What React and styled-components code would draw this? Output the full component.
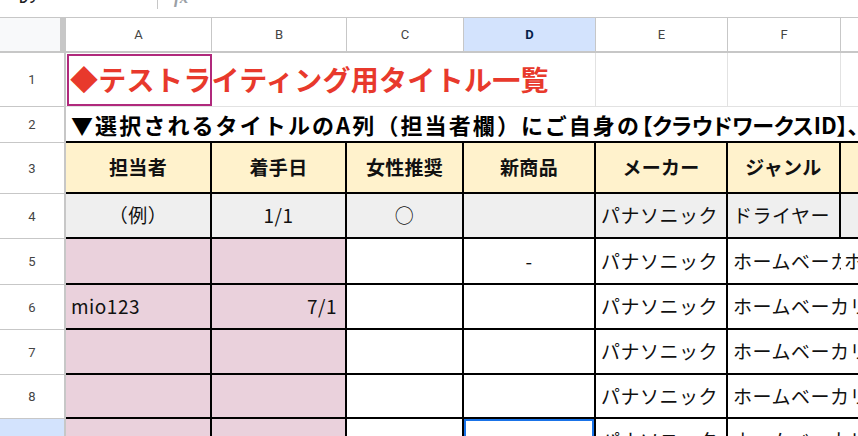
import React from 'react'
import styled, { createGlobalStyle, css } from 'styled-components'

const GlobalStyle = createGlobalStyle`
  html, body {
    margin: 0;
    padding: 0;
    background: #fff;
    overflow: hidden;
  }
`

const JP = `"Noto Sans CJK JP", "Noto Sans", sans-serif`
const UI = `Roboto, "Liberation Sans", Arial, sans-serif`

const YELLOW = '#fff2cc'
const GREY = '#efefef'
const PINK = '#ead1dc'
const HEAD_LINE = '#c7c7c7'

const COLS = [146, 135, 117, 132, 132, 113, 140]
const LETTERS = ['A', 'B', 'C', 'D', 'E', 'F', 'G']
const ACTIVE_COL = 3
const ACTIVE_ROW = 9

const line = (t) => {
  if (t === 'k') return '2px solid #000'
  if (t === 'g') return '1px solid #e2e2e2'
  return 'none'
}

const textKinds = {
  title: css`
    font-size: 28px;
    font-weight: 700;
    color: #e8392c;
    letter-spacing: 0.3px;
    padding-left: 4px;
  `,
  note: css`
    font-size: 22px;
    font-weight: 700;
    color: #000;
    letter-spacing: 2.1px;
  `,
  head: css`
    font-size: 19px;
    font-weight: 700;
    color: #111;
    letter-spacing: 0.3px;
  `,
  data: css`
    font-size: 19px;
    font-weight: 400;
    color: #111;
    letter-spacing: 0.5px;
  `
}

const selections = {
  pink: css`
    &::after {
      content: '';
      position: absolute;
      top: 1px;
      left: 1px;
      right: 0;
      bottom: 0;
      border: 2px solid #b0297c;
      pointer-events: none;
    }
  `,
  blue: css`
    &::after {
      content: '';
      position: absolute;
      top: 0;
      left: 0;
      right: 0;
      bottom: 0;
      border: 2px solid #1a73e8;
      pointer-events: none;
    }
  `
}

const Frame = styled.div`
  width: 858px;
  height: 436px;
  overflow: hidden;
  background: #fff;
`

const FormulaBar = styled.div`
  height: 17px;
  border-bottom: 1px solid ${HEAD_LINE};
  overflow: hidden;
`

const FormulaInner = styled.div`
  display: flex;
  align-items: center;
  height: 30px;
  margin-top: -17px;
`

const NameBox = styled.div`
  width: 157px;
  padding-left: 19px;
  box-sizing: border-box;
  font-family: ${UI};
  font-size: 14px;
  font-weight: 500;
  color: #1f1f1f;
`

const BarDivider = styled.div`
  width: 1px;
  height: 22px;
  background: ${HEAD_LINE};
`

const FxMark = styled.span`
  margin-left: 16px;
  font-family: "Liberation Serif", serif;
  font-style: italic;
  font-weight: 700;
  font-size: 17px;
  color: #9aa0a6;
`

const Grid = styled.div`
  display: grid;
  grid-template-columns: 66px ${COLS.map((w) => `${w}px`).join(' ')};
  grid-template-rows: 35px ${(p) => p.$rows.map((h) => `${h}px`).join(' ')};
`

const Corner = styled.div`
  background: #f8f9fa;
  border-right: 6px solid ${HEAD_LINE};
  border-bottom: 2px solid ${HEAD_LINE};
`

const ColHead = styled.div`
  box-sizing: border-box;
  display: flex;
  align-items: center;
  justify-content: center;
  border-right: 1px solid ${HEAD_LINE};
  border-bottom: 2px solid ${HEAD_LINE};
  background: ${(p) => (p.$active ? '#d3e3fd' : '#fff')};
  color: ${(p) => (p.$active ? '#041e49' : '#444')};
  font-family: ${UI};
  font-size: 13px;
  font-weight: ${(p) => (p.$active ? 700 : 400)};
`

const RowHead = styled.div`
  box-sizing: border-box;
  display: flex;
  align-items: center;
  justify-content: center;
  border-right: 2px solid ${HEAD_LINE};
  border-bottom: 1px solid ${HEAD_LINE};
  background: ${(p) => (p.$active ? '#d3e3fd' : '#fff')};
  color: ${(p) => (p.$active ? '#041e49' : '#444')};
  font-family: ${UI};
  font-size: 13px;
`

const Cell = styled.div`
  box-sizing: border-box;
  min-width: 0;
  position: relative;
  z-index: ${(p) => (p.$over ? 1 : 'auto')};
  display: flex;
  align-items: center;
  justify-content: ${(p) =>
    p.$align === 'center' ? 'center' : p.$align === 'right' ? 'flex-end' : 'flex-start'};
  padding: 0 ${(p) => (p.$align === 'right' ? 8 : 5)}px 0 ${(p) => p.$padLeft ?? 5}px;
  background: ${(p) => p.$bg || '#fff'};
  border-right: ${(p) => line(p.$r)};
  border-bottom: ${(p) => line(p.$b)};
  white-space: nowrap;
  overflow: ${(p) => (p.$over ? 'visible' : 'hidden')};
  font-family: ${JP};
  line-height: 1.2;
  ${(p) => textKinds[p.$kind || 'data']}
  ${(p) => p.$sel && selections[p.$sel]}
`

/* the katakana run in the note row sits tighter, like proportional kana */
const TightRun = styled.span`
  font-feature-settings: "palt";
  letter-spacing: 0;
`

const bordered = (cells, extra = {}) =>
  cells.map((c) => ({ r: 'k', b: 'k', ...extra, ...(typeof c === 'string' ? { t: c } : c) }))

const bodyRow = (a, b, d, sel) => [
  ...bordered([{ t: a, bg: PINK }, { t: b, bg: PINK, align: 'right' }, '', { t: d, align: 'center', sel }, 'パナソニック']),
  { t: 'ホームベーカリー', r: 'n', b: 'k', over: true },
  { t: '', r: 'n', b: 'k' }
]

const ROWS = [
  {
    h: 54,
    cells: [
      { t: '◆テストライティング用タイトル一覧', kind: 'title', r: 'n', b: 'g', over: true, sel: 'pink' },
      { r: 'n', b: 'g' },
      { r: 'n', b: 'g' },
      { r: 'g', b: 'g' },
      { r: 'g', b: 'g' },
      { r: 'g', b: 'g' },
      { r: 'n', b: 'g' }
    ]
  },
  {
    h: 36,
    cells: [
      {
        t: (
          <span>
            ▼選択されるタイトルのA列（担当者欄）にご自身の
            <TightRun>【クラウドワークスID】、</TightRun>
          </span>
        ),
        kind: 'note',
        r: 'n',
        b: 'k',
        over: true
      },
      ...Array.from({ length: 6 }, () => ({ r: 'n', b: 'k' }))
    ]
  },
  {
    h: 51,
    cells: bordered(['担当者', '着手日', '女性推奨', '新商品', 'メーカー', 'ジャンル', ''], {
      bg: YELLOW,
      kind: 'head',
      align: 'center'
    })
  },
  {
    h: 45,
    cells: bordered(
      [
        { t: '（例）', align: 'center' },
        { t: '1/1', align: 'center' },
        { t: '○', align: 'center' },
        '',
        'パナソニック',
        'ドライヤー',
        ''
      ],
      { bg: GREY }
    )
  },
  {
    h: 46,
    cells: [
      ...bordered([{ t: '', bg: PINK }, { t: '', bg: PINK }, '', { t: '-', align: 'center' }, 'パナソニック']),
      { t: 'ホームベーカリー', r: 'n', b: 'k' },
      { t: 'ホームベーカリー', r: 'n', b: 'k', padLeft: 3 }
    ]
  },
  { h: 45, cells: bodyRow('mio123', '7/1', '') },
  { h: 45, cells: bodyRow('', '', '') },
  { h: 44, cells: bodyRow('', '', '') },
  { h: 45, cells: bodyRow('', '', '', 'blue') }
]

export default function App () {
  return (
    <Frame>
      <GlobalStyle />
      <FormulaBar>
        <FormulaInner>
          <NameBox>D9</NameBox>
          <BarDivider />
          <FxMark>fx</FxMark>
        </FormulaInner>
      </FormulaBar>
      <Grid $rows={ROWS.map((r) => r.h)}>
        <Corner />
        {LETTERS.map((l, i) => (
          <ColHead key={l} $active={i === ACTIVE_COL}>{l}</ColHead>
        ))}
        {ROWS.map((row, ri) => (
          <React.Fragment key={ri}>
            <RowHead $active={ri + 1 === ACTIVE_ROW}>{ri + 1}</RowHead>
            {row.cells.map((c, ci) => (
              <Cell
                key={ci}
                $bg={c.bg}
                $align={c.align}
                $kind={c.kind}
                $r={c.r}
                $b={c.b}
                $over={c.over}
                $sel={c.sel}
                $padLeft={c.padLeft}
              >
                {c.t}
              </Cell>
            ))}
          </React.Fragment>
        ))}
      </Grid>
    </Frame>
  )
}
